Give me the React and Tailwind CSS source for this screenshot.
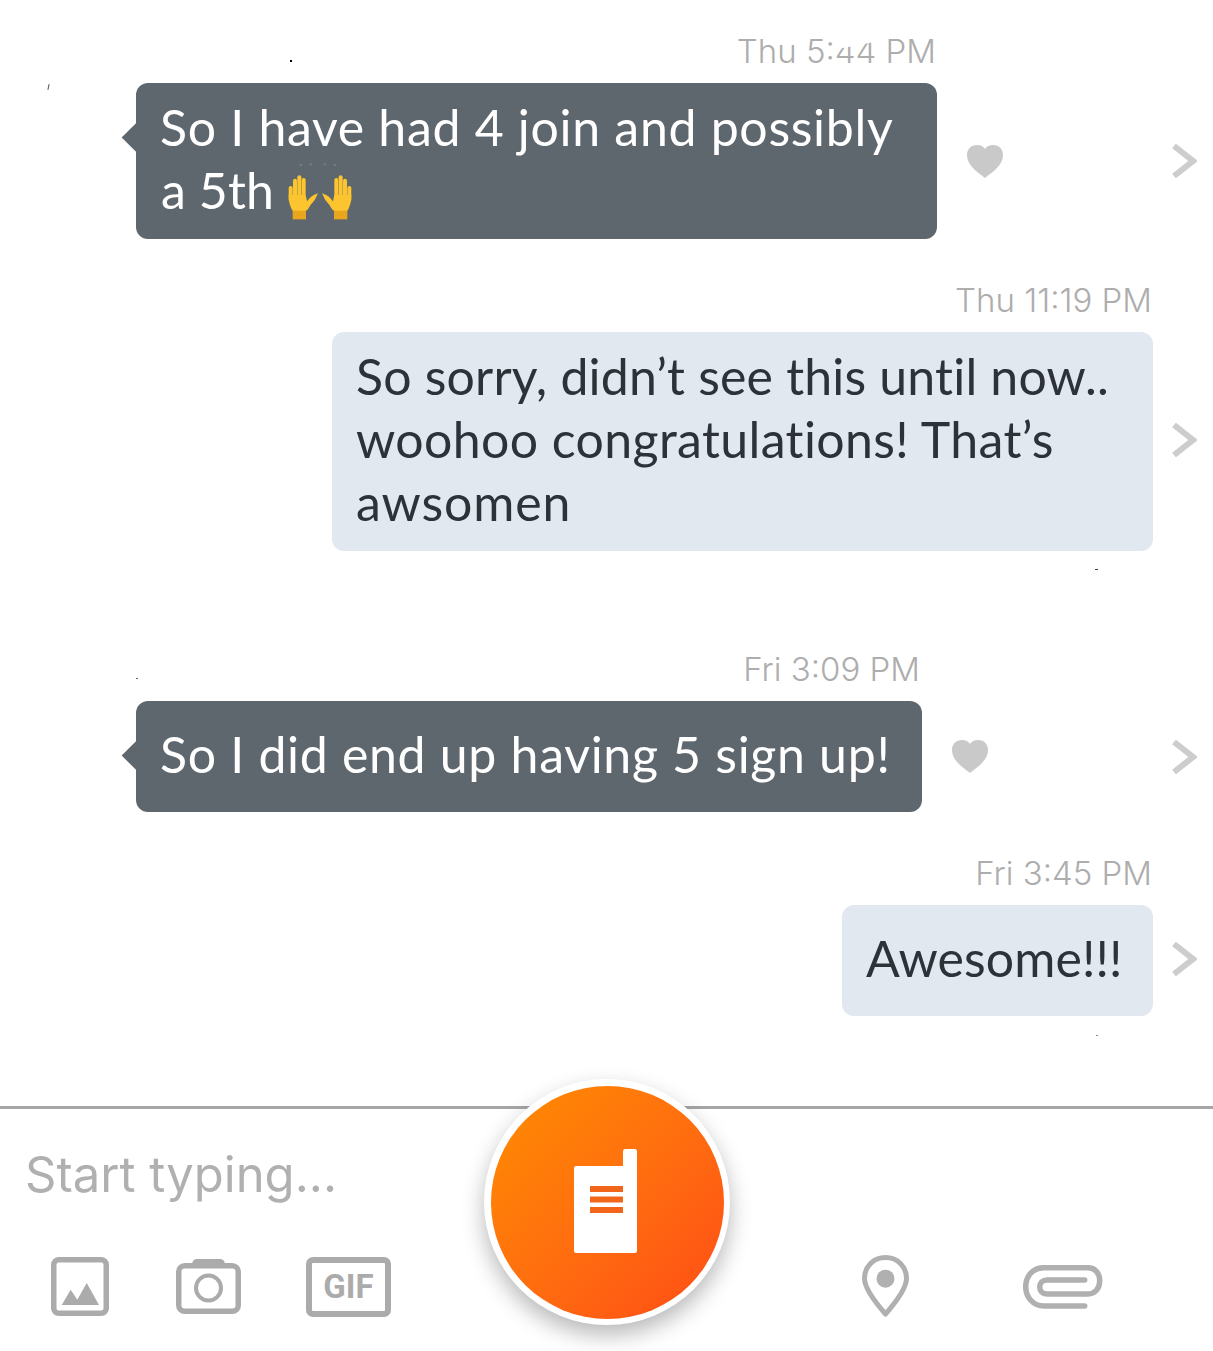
import React from 'react';

const bubbleFont = { fontFamily: '"Lato", sans-serif' };
const timeFont = { fontFamily: '"Inter", sans-serif' };

const Heart = () => (
  <svg width="36" height="33" viewBox="0 0 36 33" className="shrink-0">
    <path d="M18 33C15 30 0 22 0 10C0 4 4 0 10 0C13.500 0 16.500 1.500 18 4C19.500 1.500 22.500 0 26 0C32 0 36 4 36 10C36 22 21 30 18 33Z" fill="#c9c9c9" />
  </svg>
);

const Chevron = ({ className = '' }) => (
  <svg width="25" height="34" viewBox="0 0 25 34" className={`shrink-0 ${className}`}>
    <path d="M2 2L21 17L2 32" fill="none" stroke="#cdcdcd" strokeWidth="6" />
  </svg>
);

const Hand = () => (
  <g>
    <path d="M38 148H78V178H38Z" fill="#e9a51c" />
    <g stroke="#fcc42e" strokeWidth="12" strokeLinecap="round">
      <line x1="32" y1="84" x2="32" y2="120" />
      <line x1="45" y1="62" x2="45" y2="115" />
      <line x1="58" y1="52" x2="58" y2="115" />
      <line x1="71" y1="60" x2="71" y2="115" />
    </g>
    <path d="M26 105L77 105L81 124Q95 105 114 100Q107 120 91 136Q84 150 78 152L38 152Q26 135 26 105Z" fill="#fcc42e" />
  </g>
);

// the raised hands emoji
const Hands = () => (
  <svg width="80" height="65" viewBox="0 0 240 195" className="ml-[6px] mt-[4px] shrink-0">
    <g fill="#737b7d">
      <circle cx="62" cy="15" r="4" />
      <circle cx="92" cy="13" r="4" />
      <circle cx="135" cy="13" r="4" />
      <circle cx="165" cy="15" r="4" />
    </g>
    <Hand />
    <g transform="translate(240 0) scale(-1 1)">
      <Hand />
    </g>
  </svg>
);

const IncomingRow = ({ time, timeClass, gapClass, widthClass, children }) => (
  <div className={gapClass}>
    <div className={`h-[32px] mb-[16px] text-right text-[33px] font-light leading-[32px] text-[#adadad] ${timeClass}`} style={timeFont}>{time}</div>
    <div className="flex items-center pl-[136px] pr-[16px]">
      <div className={`relative flex min-h-[111px] flex-col justify-center rounded-[12px] bg-[#5f676e] pl-[24px] pt-[13px] pb-[17px] text-[50px] leading-[63px] whitespace-nowrap text-white ${widthClass}`} style={bubbleFont}>
        <span className="absolute left-[-10px] top-[44px] h-[21px] w-[21px] rotate-45 bg-[#5f676e]" />
        {children}
      </div>
      <div className="ml-[30px]"><Heart /></div>
      <div className="ml-auto"><Chevron /></div>
    </div>
  </div>
);

const OutgoingRow = ({ time, gapClass, widthClass, children }) => (
  <div className={gapClass}>
    <div className="h-[32px] mb-[16px] pr-[61px] text-right text-[33px] font-light leading-[32px] text-[#adadad]" style={timeFont}>{time}</div>
    <div className="flex items-center justify-end pr-[16px]">
      <div className={`flex min-h-[111px] flex-col justify-center rounded-[12px] bg-[#e1e8f0] pl-[24px] pt-[13px] pb-[17px] text-[50px] leading-[63px] whitespace-nowrap text-[#2c3238] ${widthClass}`} style={bubbleFont}>
        {children}
      </div>
      <div className="ml-[19px]"><Chevron className="-mt-[3px]" /></div>
    </div>
  </div>
);

const WalkieButton = () => (
  <div className="absolute left-[484px] top-[1079px] flex h-[246px] w-[246px] items-center justify-center rounded-full bg-white shadow-[0_10px_22px_rgba(0,0,0,0.28)]">
    <div className="flex h-[233px] w-[233px] items-center justify-center rounded-full bg-gradient-to-br from-[#ff8c00] to-[#ff4a16]">
      <svg width="63" height="104" viewBox="0 0 63 104" className="mr-[4px] mb-[2px]">
        <path d="M2 17H49V2C49 1 50 0 51 0H61C62 0 63 1 63 2V102C63 103 62 104 61 104H2C1 104 0 103 0 102V19C0 18 1 17 2 17Z" fill="#fff" />
        <g fill="#f2661b">
          <rect x="16" y="37" width="33" height="6" />
          <rect x="16" y="47.500" width="33" height="6" />
          <rect x="16" y="58" width="33" height="6" />
        </g>
      </svg>
    </div>
  </div>
);

export default function App() {
  return (
    <div className="relative h-[1351px] w-[1213px] overflow-hidden bg-white">
      <div className="pt-[35px]">
        <IncomingRow time="Thu 5:44 PM" timeClass="pr-[277px]" gapClass="" widthClass="w-[801px]">
          <div className="tracking-[0.69px]">So I have had 4 join and possibly</div>
          <div className="flex h-[63px] items-center pl-px tracking-[0.1px]">a 5th<Hands /></div>
        </IncomingRow>
        <OutgoingRow time="Thu 11:19 PM" gapClass="mt-[45px]" widthClass="w-[821px]">
          <div className="tracking-[0.18px]">So sorry, didn’t see this until now..</div>
          <div className="tracking-[0.38px]">woohoo congratulations! That’s</div>
          <div className="tracking-[0.85px]">awsomen</div>
        </OutgoingRow>
        <IncomingRow time="Fri 3:09 PM" timeClass="pr-[293px]" gapClass="mt-[102px]" widthClass="w-[786px]">
          <div className="tracking-[0.69px]">So I did end up having 5 sign up!</div>
        </IncomingRow>
        <OutgoingRow time="Fri 3:45 PM" gapClass="mt-[45px]" widthClass="w-[311px]">
          <div className="tracking-[0.1px]">Awesome!!!</div>
        </OutgoingRow>
      </div>

      <div className="mt-[90px] h-[3px] bg-[#a6a6a6]" />

      <div className="mt-[36px] pl-[25px] text-[49px] leading-[60px] text-[#b0b0b0]" style={{ fontFamily: '"Inter", sans-serif' }}>
        Start typing...
      </div>

      <div className="mt-[50px] flex h-[63px] items-center pl-[51px]">
        <svg width="58" height="59" viewBox="0 0 58 59" className="shrink-0">
          <rect x="2.750" y="2.750" width="52.500" height="53.500" rx="5" fill="none" stroke="#ababab" strokeWidth="5.500" />
          <path d="M10.700 48L19.700 32.700L26.300 42.700L35.700 26L48 48Z" fill="#ababab" />
        </svg>
        <svg width="65" height="55" viewBox="0 0 65 55" className="ml-[67px] shrink-0">
          <path d="M16 6C16 2 18 0 21 0H44C47 0 49 2 49 6Z" fill="#ababab" />
          <rect x="2.750" y="6.750" width="59.500" height="45.500" rx="6" fill="none" stroke="#ababab" strokeWidth="5.500" />
          <circle cx="32.500" cy="29" r="12.500" fill="none" stroke="#ababab" strokeWidth="4" />
        </svg>
        <div className="ml-[65px] flex h-[60px] w-[85px] shrink-0 items-center justify-center rounded-[7px] border-[6px] border-[#ababab] text-[33px] font-bold leading-none text-[#ababab]" style={{ fontFamily: '"Roboto", sans-serif' }}>
          GIF
        </div>
        <svg width="47" height="63" viewBox="0 0 47 63" className="ml-[471px] shrink-0">
          <path d="M23.500 2.500C11 2.500 2.500 12 2.500 23.500C2.500 33 13 47 23.500 59C34 47 44.500 33 44.500 23.500C44.500 12 36 2.500 23.500 2.500Z" fill="none" stroke="#b0b0b0" strokeWidth="5" strokeLinejoin="round" />
          <circle cx="23.500" cy="23.700" r="9" fill="#b0b0b0" />
        </svg>
        <svg width="80" height="44" viewBox="0 0 80 44" className="ml-[114px] shrink-0">
          <path d="M61.700 41H21C10 41 2.700 32 2.700 21.800C2.700 11 10 2.700 21 2.700H65C72 2.700 76.700 8 76.700 15.800C76.700 23.500 72 29 65 29H24C19.500 29 16.700 26 16.700 22C16.700 18 19.500 15 24 15H61.700" fill="none" stroke="#b0b0b0" strokeWidth="5.500" strokeLinecap="round" />
        </svg>
      </div>

      <WalkieButton />

      {/* scan marks from the original picture */}
      <span className="absolute left-[836px] top-[31px] h-[14px] w-[44px] -rotate-[11deg] bg-white" />
      <span className="absolute left-[290px] top-[60px] h-[2px] w-[2px] bg-black" />
      <span className="absolute left-[48px] top-[84px] h-[6px] w-px rotate-12 bg-[#555555]" />
      <span className="absolute left-[1095px] top-[569px] h-px w-[3px] bg-[#444444]" />
      <span className="absolute left-[136px] top-[678px] h-px w-[2px] bg-[#666666]" />
      <span className="absolute left-[1096px] top-[1035px] h-px w-[2px] bg-[#888888]" />
    </div>
  );
}
